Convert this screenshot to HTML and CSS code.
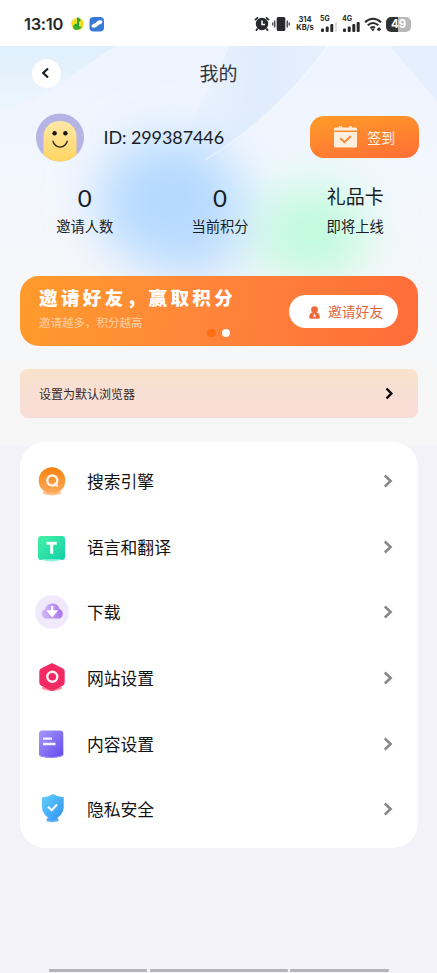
FILE: index.html
```
<!DOCTYPE html>
<html lang="zh-CN">
<head>
<meta charset="utf-8">
<title>我的</title>
<link rel="stylesheet" href="styles.css">
</head>
<body>
<header class="status">
  <span class="clock">13:10</span>
  <svg class="status-apps" width="34" height="16" viewBox="0 0 34 16">
    <circle cx="6.5" cy="8" r="6.3" fill="#f5dc25"/><path d="M7 1 10 4 8 6v4a3 3 0 1 1-2-2V2z" fill="#24a93b"/><path d="M2 10q5-1 9 1-3 4-7 2z" fill="#38b22c"/>
    <rect x="18.5" y="1" width="14.5" height="14.5" rx="4" fill="#3779d4"/><path d="M20.5 11c0-4 4-3 5-5 2-2 4-2 6-1 0 4-4 3-5 5-2 2-4 2-6 1z" fill="#fff"/>
  </svg>
  <svg class="alarm" width="16" height="16" viewBox="0 0 16 16"><circle cx="8" cy="8" r="6.2" fill="#28292b"/><path d="M1 4.2 4 1.3M15 4.2 12 1.3M3.6 12.5 2 14.8M12.4 12.5 14 14.8" stroke="#28292b" stroke-width="1.8"/><path d="M8 4.5V8.5H11" fill="none" stroke="#fff" stroke-width="1.5"/></svg>
  <svg class="vibrate" width="18" height="16" viewBox="0 0 18 16"><rect x="4.7" y="1" width="8.6" height="14" rx="1.5" fill="#28292b"/><path d="M2.8 4.5v7M.8 6.5v3M15.2 4.5v7M17.2 6.5v3" stroke="#28292b" stroke-width="1.2"/></svg>
  <span class="speed">314<br>KB/s</span>
  <span class="signal"><b>5G</b><svg width="18" height="10" viewBox="0 0 18 10"><g fill="#28292b"><rect x="1" y="6.5" width="3" height="3.5" rx="1"/><rect x="5.7" y="4.5" width="3" height="5.5" rx="1"/><rect x="10.3" y="2" width="3" height="8" rx="1"/></g><rect x="15" width="2" height="10" rx="1" fill="#ddd"/></svg></span>
  <span class="signal"><b>4G</b><svg width="18" height="10" viewBox="0 0 18 10"><g fill="#28292b"><rect x="1" y="6.5" width="3" height="3.5" rx="1"/><rect x="5.7" y="4.5" width="3" height="5.5" rx="1"/><rect x="10.3" y="2" width="3" height="8" rx="1"/><rect x="14.7" width="3" height="10" rx="1"/></g></svg></span>
  <svg class="wifi" width="18" height="15" viewBox="0 0 18 15"><path d="M1 5.2q8-7 16 0M3.7 8.3q5.3-4.6 10.6 0M6.4 11.1q2.6-2.2 4.6-.4" fill="none" stroke="#28292b" stroke-width="1.9"/><path d="m6.5 11.5 2.5 2.8 2-2.8z" fill="#28292b"/><circle cx="15" cy="12.2" r="1.7" fill="#28292b"/></svg>
  <span class="battery">49</span>
</header>

<main class="page">
  <svg class="backdrop" width="437" height="400" viewBox="0 0 437 400" aria-hidden="true">
    <defs>
      <linearGradient id="base" x1="0" y1="0" x2="0" y2="1"><stop offset="0" stop-color="#eef4fe"/><stop offset=".35" stop-color="#f3f7fe"/><stop offset=".6" stop-color="#f6f7f9"/><stop offset="1" stop-color="#f6f6f6"/></linearGradient>
      <linearGradient id="corner" x1="0" y1="0" x2="0" y2="1"><stop offset="0" stop-color="#dfeffc"/><stop offset="1" stop-color="#edf6fd"/></linearGradient>
      <linearGradient id="band" x1="0" y1="0" x2="1" y2="0"><stop offset="0" stop-color="#e0edfd" stop-opacity="0"/><stop offset=".55" stop-color="#dfecfd"/><stop offset="1" stop-color="#e6f0fe"/></linearGradient>
      <filter id="soft" x="-60%" y="-60%" width="220%" height="220%"><feGaussianBlur stdDeviation="25"/></filter>
    </defs>
    <rect width="437" height="400" fill="url(#base)"/>
    <path d="M0 0H115Q80 24 40 50L0 66z" fill="url(#corner)"/>
    <path d="M230 0H328Q277 69 210 112L170 120z" fill="url(#band)"/>
    <path d="M390 0H437V55z" fill="#deebfd" opacity=".6"/>
    <g filter="url(#soft)">
      <ellipse cx="170" cy="157" rx="73" ry="65" fill="#b4d9ff"/>
      <ellipse cx="190" cy="200" rx="50" ry="32" fill="#b9dbff"/>
      <ellipse cx="312" cy="187" rx="55" ry="48" fill="#bffbdc"/>
    </g>
    <path d="M328 0Q277 69 205 114" fill="none" stroke="#fff" stroke-opacity=".45" stroke-width="1.5"/>
  </svg>

  <nav class="topbar">
    <a class="back"><svg width="10" height="12" viewBox="0 0 10 12"><path d="M7 1.5 2.2 6 7 10.5" fill="none" stroke="#181818" stroke-width="2.1"/></svg></a>
    <h1>我的</h1>
  </nav>

  <section class="profile">
    <svg width="48" height="49" viewBox="0 0 48 49">
      <defs><clipPath id="face"><circle cx="24" cy="24.5" r="24"/></clipPath><linearGradient id="skin" x1="0" y1="0" x2="0" y2="1"><stop offset="0" stop-color="#ffe8a8"/><stop offset="1" stop-color="#ffd45f"/></linearGradient></defs>
      <circle cx="24" cy="24.5" r="24" fill="#b5b4e4"/>
      <path clip-path="url(#face)" d="M7.5 49V24C7.5 2.5 40.5 2.5 40.5 24V49z" fill="url(#skin)"/>
      <circle cx="18.6" cy="20.2" r="2.2" fill="#171513"/><circle cx="29.4" cy="20.2" r="2.2" fill="#171513"/>
      <path d="M16.7 27.8c2.7 8.3 12.1 8.3 14.8 0" fill="none" stroke="#28221c" stroke-width="1.3"/>
    </svg>
    <span class="uid">ID: 299387446</span>
    <button class="checkin"><svg width="23" height="22" viewBox="0 0 23 22"><path d="M1 1.5H5V.2H8V1.5H15V.2H18V1.5H22Q23 1.5 23 3V4.5H0V3Q0 1.5 1 1.5M0 6H23V20Q23 21.5 21.5 21.5H1.5Q0 21.5 0 20z" fill="#ffeddd"/><path d="m6.2 12.2 4.2 4 6.4-6" fill="none" stroke="#f98b35" stroke-width="2"/></svg><span>签到</span></button>
  </section>

  <section class="stats">
    <div><strong>0</strong><span>邀请人数</span></div>
    <div><strong>0</strong><span>当前积分</span></div>
    <div><strong class="word">礼品卡</strong><span>即将上线</span></div>
  </section>

  <section class="banner">
    <div class="copy"><h2>邀请好友，赢取积分</h2><p>邀请越多，积分越高</p></div>
    <a class="invite"><svg width="11" height="13" viewBox="0 0 11 13"><circle cx="5.5" cy="3.6" r="3.4" fill="#ee6a3a"/><path d="M3 6.2Q.2 7.6.2 10.5v1Q.2 12.7 1.7 12.7H9.3Q10.8 12.7 10.8 11.5v-1Q10.8 7.6 8 6.2z" fill="#ee6a3a"/><path d="m5.5 7.3 1.2 3-1.2 1-1.2-1z" fill="#fff"/></svg><span>邀请好友</span></a>
    <div class="dots"><i></i><i class="on"></i></div>
  </section>

  <a class="default-browser"><span>设置为默认浏览器</span><svg width="9" height="13" viewBox="0 0 9 13"><path d="m1.5 1.5 4.8 5-4.8 5" fill="none" stroke="#0c0808" stroke-width="2.5"/></svg></a>

  <ul class="menu">
    <li>
      <svg class="icon" viewBox="0 0 34 34"><defs><linearGradient id="or" x1="0" y1="0" x2="0" y2="1"><stop offset="0" stop-color="#f5820f"/><stop offset="1" stop-color="#ffab5c"/></linearGradient></defs><ellipse cx="17" cy="28.6" rx="9.3" ry="2.8" fill="#ffc189"/><circle cx="17" cy="16.5" r="13.3" fill="url(#or)"/><path d="M9 26.5Q17 32 25 26.5v2H9z" fill="#ffc48f"/><circle cx="17.3" cy="16.5" r="5" fill="none" stroke="#fff2e4" stroke-width="2.4"/><path d="m19.5 19 3.3 3.4" stroke="#fff2e4" stroke-width="2.2"/></svg>
      <span>搜索引擎</span><svg class="chev" viewBox="0 0 10 14"><path d="m1.8 1.5 5.8 5.5-5.8 5.5"/></svg></li>
    <li>
      <svg class="icon" viewBox="0 0 34 34"><defs><linearGradient id="gr" x1="0" y1="0" x2="1" y2="1"><stop offset="0" stop-color="#46f1a3"/><stop offset="1" stop-color="#12d0ac"/></linearGradient></defs><path d="M6 27Q16 34 27 27z" fill="#8df8df"/><rect x="3" y="6" width="27" height="24" rx="3" fill="url(#gr)"/><path d="M5.5 29.2H27.5Q16 34 5.5 29.2" fill="#8ff5dd"/><path d="M11.5 13.2H21.8M16.7 13.2V23.8" stroke="#f5fffc" stroke-width="3"/></svg>
      <span>语言和翻译</span><svg class="chev" viewBox="0 0 10 14"><path d="m1.8 1.5 5.8 5.5-5.8 5.5"/></svg></li>
    <li>
      <svg class="icon" viewBox="0 0 34 34"><defs><linearGradient id="pu" x1="0" y1="0" x2="1" y2="0"><stop offset="0" stop-color="#d3bafb"/><stop offset="1" stop-color="#aa75e9"/></linearGradient></defs><circle cx="17" cy="17" r="16.8" fill="#efe9fb"/><path d="M11 23.5H24A5 5 0 0 0 24.5 14A7.5 7.5 0 0 0 10 14.2A4.8 4.8 0 0 0 11 23.5z" fill="url(#pu)"/><path d="M17.2 11V17M13.7 16.5 17.2 20.7 20.7 16.5z" fill="#fff" stroke="#fff" stroke-width="2.3"/></svg>
      <span>下载</span><svg class="chev" viewBox="0 0 10 14"><path d="m1.8 1.5 5.8 5.5-5.8 5.5"/></svg></li>
    <li>
      <svg class="icon" viewBox="0 0 34 34"><path d="M7 26h20v2Q17 32 7 28z" fill="#ff92a8"/><path d="M15 3Q17 1.7 19 3L28 7.6Q29.7 8.6 29.7 10.5V21.5Q29.7 23.5 28 24.5L19 29.2Q17 30.3 15 29.2L6 24.5Q4.3 23.5 4.3 21.5V10.5Q4.3 8.6 6 7.6z" fill="#f32963"/><circle cx="17.3" cy="15.8" r="5" fill="none" stroke="#fff1f5" stroke-width="2.4"/></svg>
      <span>网站设置</span><svg class="chev" viewBox="0 0 10 14"><path d="m1.8 1.5 5.8 5.5-5.8 5.5"/></svg></li>
    <li>
      <svg class="icon" viewBox="0 0 34 34"><defs><linearGradient id="vi" x1="0" y1="0" x2="1" y2="1"><stop offset="0" stop-color="#a79af9"/><stop offset="1" stop-color="#6348ee"/></linearGradient></defs><path d="M7 3.5H25Q28.3 3.5 28.3 6.5V27.5Q28 29 26 29.5Q16 32 6 29.5Q4 29 4 27.5V6.5Q4 3.5 7 3.5" fill="url(#vi)"/><path d="M4.5 28Q16 32 28 28L26 29.6Q16 32 6 29.6z" fill="#9c8bf4"/><path d="M8 11.7h9M8 17h12.5" stroke="#f5f1ff" stroke-width="2.3"/></svg>
      <span>内容设置</span><svg class="chev" viewBox="0 0 10 14"><path d="m1.8 1.5 5.8 5.5-5.8 5.5"/></svg></li>
    <li>
      <svg class="icon" viewBox="0 0 34 34"><defs><linearGradient id="bl" x1="0" y1="0" x2="1" y2="1"><stop offset="0" stop-color="#62d1fb"/><stop offset="1" stop-color="#3190f5"/></linearGradient></defs><path d="m12 26-.5 3.3Q17.5 30.8 23.5 29.3L23 26z" fill="#54abf7"/><path d="M18 2Q22.5 5 28.7 5.2V15.5Q28.7 23 18 28.5Q7 23 7 15.5V5.2Q13.5 5 18 2" fill="url(#bl)"/><path d="m13 14.8 3.7 3.4 5.3-5.6" fill="none" stroke="#f3fcff" stroke-width="2.2"/></svg>
      <span>隐私安全</span><svg class="chev" viewBox="0 0 10 14"><path d="m1.8 1.5 5.8 5.5-5.8 5.5"/></svg></li>
  </ul>
</main>
<footer class="gesture"><i></i><i></i><i></i></footer>
</body>
</html>
```

FILE: styles.css
```
* { box-sizing: border-box; }
body {
  margin: 0;
  width: 437px;
  height: 973px;
  display: flex;
  flex-direction: column;
  overflow: hidden;
  background: #f2f2f8;
  color: #181d27;
  font-family: "Noto Sans CJK SC", sans-serif;
}
h1, h2, p, ul { margin: 0; padding: 0; font-weight: 400; }
svg { display: block; flex: none; }
span, h1, h2, p { white-space: nowrap; }
button { border: 0; padding: 0; font: inherit; }

.status {
  height: 46px;
  flex: none;
  background: #fff;
  display: flex;
  align-items: center;
  padding: 2px 24px 0;
  color: #28292b;
}
.clock { width: 47px; font: 600 16.5px/20px Inter, sans-serif; letter-spacing: -0.3px; }
.alarm { margin-left: 149px; }
.vibrate { margin-left: 2px; }
.speed {
  width: 20px;
  margin-left: 5px;
  font: 700 7.5px/8px Inter, sans-serif;
  text-align: center;
}
.signal { width: 18px; margin-left: 5px; height: 16px; display: flex; flex-direction: column; }
.signal + .signal { margin-left: 4px; }
.signal b { font: 700 7px/6px Inter, sans-serif; }
.wifi { margin-left: 4px; }
.battery {
  width: 25px;
  height: 15px;
  margin-left: 4px;
  border-radius: 5px;
  background: linear-gradient(90deg, #303133 48%, #b8b8b8 48%);
  color: #fff;
  font: 700 11.5px/15px Inter, sans-serif;
  text-align: center;
}

.page { position: relative; flex: 1; }
.backdrop { position: absolute; left: 0; top: 0; z-index: -1; }

.topbar {
  height: 54px;
  display: grid;
  grid-template-columns: 29px 1fr 29px;
  align-items: center;
  padding: 0 31.5px;
}
.back {
  width: 29px;
  height: 29px;
  border-radius: 50%;
  background: #fff;
  display: grid;
  place-items: center;
}
.topbar h1 { font-size: 19px; line-height: 28px; text-align: center; color: #30343c; }

.profile {
  display: flex;
  align-items: center;
  height: 49px;
  margin-top: 12.5px;
  padding: 0 18px 0 35.5px;
}
.uid { margin-left: 20px; font: 400 18px/24px Lato, sans-serif; letter-spacing: -0.1px; }
.checkin {
  width: 109px;
  height: 42px;
  margin-left: auto;
  border-radius: 14px;
  background: linear-gradient(170deg, #ff9c27, #ff6e37);
  color: #fff3e8;
  display: flex;
  align-items: center;
  justify-content: center;
  gap: 10.5px;
  font-size: 14px;
}

.stats {
  display: grid;
  grid-template-columns: repeat(3, 135.2px);
  justify-content: center;
  margin: 20px 0 0 3px;
  text-align: center;
}
.stats div { display: flex; flex-direction: column; }
.stats strong { font: 400 24px/32px Lato, sans-serif; }
.stats .word { font: 400 19px/28px "Noto Sans CJK SC", sans-serif; padding-bottom: 4px; }
.stats span { font-size: 14.3px; line-height: 22px; margin-top: 1px; }

.banner {
  position: relative;
  height: 70px;
  margin: 39.5px 19.5px 0;
  padding: 0 19.5px;
  border-radius: 19px;
  background: linear-gradient(100deg, #ff9b2b, #ff863a 45%, #ff6c39);
  display: flex;
  align-items: center;
  justify-content: space-between;
  color: #fff;
}
.copy { align-self: flex-start; padding-top: 8px; }
.copy h2 { font-size: 18.5px; font-weight: 900; line-height: 26px; letter-spacing: 3.4px; }
.copy p { font-size: 11.5px; line-height: 16px; margin-top: 3.5px; color: #ffd0a4; }
.invite {
  width: 109px;
  height: 33px;
  border-radius: 17px;
  background: #fff;
  color: #df673f;
  display: flex;
  align-items: center;
  padding-left: 20px;
  gap: 8px;
  font-size: 13.8px;
}
.invite svg { margin-top: 2px; }
.dots { position: absolute; left: 187.5px; bottom: 9px; display: flex; gap: 6px; }
.dots i { width: 8.5px; height: 8.5px; border-radius: 50%; background: #ff6e13; }
.dots .on { background: #fff; }

.default-browser {
  height: 49px;
  margin: 22.5px 19.5px 0;
  padding: 0 24px 0 19.5px;
  border-radius: 8px;
  background: linear-gradient(#f8e3cb, #f8dfd3 45%, #f7dcd5);
  display: flex;
  align-items: center;
  justify-content: space-between;
  color: #332a28;
  font-size: 12px;
}

.menu {
  list-style: none;
  margin: 24.5px 19.5px 0;
  height: 406px;
  padding: 6px 25px 0 15.5px;
  border-radius: 25px;
  background: #fff;
}
.menu li {
  height: 65.7px;
  display: flex;
  align-items: center;
  color: #121212;
  font-size: 16.8px;
}
.icon { width: 34px; height: 34px; }
.menu span { margin-left: 18px; flex: 1; }
.chev { width: 10px; height: 14px; fill: none; stroke: #89898b; stroke-width: 2.6; }

.gesture {
  flex: none;
  height: 4.5px;
  padding: 0 48.5px;
  display: grid;
  grid-template-columns: 98.5px 1fr 98.5px;
  gap: 2.5px;
}
.gesture i { height: 3px; border-radius: 1px; background: #b4b4bd; }
```
